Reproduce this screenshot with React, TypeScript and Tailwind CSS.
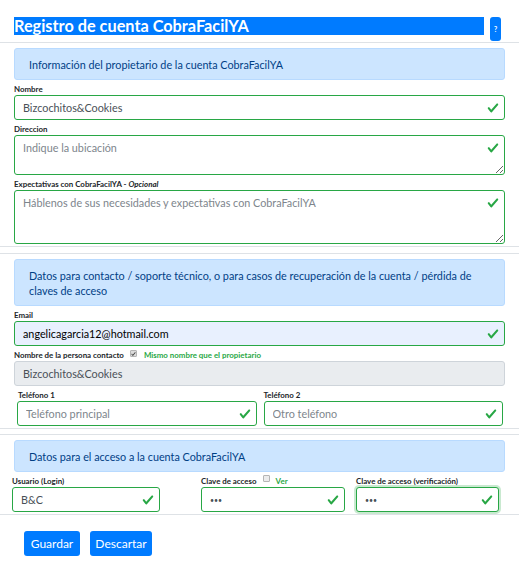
import type { ReactNode } from "react";

const checkPath =
  "M2.3 6.73L.6 4.53c-.4-1.04.46-1.4 1.1-.8l1.1 1.4 3.4-3.8c.6-.63 1.6-.27 1.2.7l-4 4.6c-.43.5-.8.4-1.1.1z";

function Check({ top = false }: { top?: boolean }) {
  return (
    <svg
      viewBox="0 0 8 8"
      className={top ? "pointer-events-none absolute right-[6px] top-[7px] h-[12px] w-[12px]" : "pointer-events-none absolute right-[6px] top-1/2 h-[12px] w-[12px] -translate-y-1/2"}
    >
      <path fill="#28a745" d={checkPath} />
    </svg>
  );
}

function Label({ children }: { children: ReactNode }) {
  return <div className="flex h-[15px] items-end pb-[1px] text-[7.9px] font-bold leading-[10px] text-[#212529]">{children}</div>;
}

function Alert({ children, tall = false }: { children: ReactNode; tall?: boolean }) {
  return (
    <div
      className={
        tall
          ? "flex h-[47px] items-center rounded-[3px] border border-[#b8daff] bg-[#cce5ff] pl-[14px] text-[10.8px] leading-[15px] text-[#004085]"
          : "flex h-[32px] items-center rounded-[3px] border border-[#b8daff] bg-[#cce5ff] pl-[14px] text-[10.8px] leading-[15px] text-[#004085]"
      }
    >
      <div>{children}</div>
    </div>
  );
}

const inputCls =
  "block h-[25px] w-full rounded-[3px] border border-[#28a745] bg-white pl-[8px] pr-[22px] text-[10.8px] text-[#495057] outline-none placeholder:text-[#7d858c]";

function TextInput({ value, placeholder, type = "text", className = "" }: { value?: string; placeholder?: string; type?: string; className?: string }) {
  return (
    <div className="relative">
      <input type={type} defaultValue={value} placeholder={placeholder} className={inputCls + " " + className} />
      <Check />
    </div>
  );
}

function Area({ placeholder, h }: { placeholder: string; h: string }) {
  return (
    <div className="relative">
      <textarea
        placeholder={placeholder}
        className={
          "block w-full rounded-[3px] border border-[#28a745] bg-white pl-[8px] pr-[22px] pt-[5px] text-[10.8px] leading-[14px] text-[#495057] outline-none placeholder:text-[#7d858c] " +
          h
        }
      />
      <Check top />
    </div>
  );
}

function Box({ checked = false }: { checked?: boolean }) {
  return (
    <span
      className={
        checked
          ? "mb-[3px] ml-[6px] inline-flex h-[7px] w-[7px] items-center justify-center rounded-[1px] border border-[#b5b5b5] bg-[#dcdcdc]"
          : "mb-[4px] ml-[6px] inline-flex h-[7px] w-[7px] rounded-[1px] border border-[#b5b5b5] bg-[#ececec]"
      }
    >
      {checked ? (
        <svg viewBox="0 0 8 8" className="h-[6px] w-[6px]">
          <path fill="#444" d={checkPath} />
        </svg>
      ) : null}
    </span>
  );
}

export default function App() {
  return (
    <div className="min-h-[575px] w-[519px] bg-white font-['Lato',sans-serif] text-[#212529]">
      <div className="flex items-start pl-[14px] pr-[18px] pt-[17px]">
        <div className="h-[18px] flex-1 bg-[#007bff] text-[16.3px] font-bold leading-[18px] text-white">Registro de cuenta CobraFacilYA</div>
        <button type="button" className="ml-[6px] h-[24px] w-[11px] rounded-[3px] bg-[#007bff] text-[7px] font-bold leading-none text-white">
          ?
        </button>
      </div>
      <div className="mt-[1px] border-t border-[#dee2e6]" />

      {/* propietario */}
      <div className="border-b border-[#dee2e6] px-[14px] pb-[2px] pt-[5px]">
        <Alert>Información del propietario de la cuenta CobraFacilYA</Alert>
        <Label>Nombre</Label>
        <TextInput value="Bizcochitos&Cookies" />
        <Label>Direccion</Label>
        <Area placeholder="Indique la ubicación" h="h-[40px]" />
        <Label>
          Expectativas con CobraFacilYA -&nbsp;<i>Opcional</i>
        </Label>
        <Area placeholder="Háblenos de sus necesidades y expectativas con CobraFacilYA" h="h-[54px]" />
      </div>

      {/* contacto */}
      <div className="mt-[6px] border-y border-[#dee2e6] px-[14px] pb-[2px] pt-[5px]">
        <Alert tall>
          Datos para contacto / soporte técnico, o para casos de recuperación de la cuenta / pérdida de
          <br />
          claves de acceso
        </Alert>
        <Label>Email</Label>
        <TextInput value="angelicagarcia12@hotmail.com" className="!bg-[#e8f0fe] !text-[#000]" />
        <Label>
          <span>Nombre de la persona contacto</span>
          <Box checked />
          <span className="ml-[7px] text-[#28a745]">Mismo nombre que el propietario</span>
        </Label>
        <input
          disabled
          defaultValue="Bizcochitos&Cookies"
          className="block h-[25px] w-full rounded-[3px] border border-[#ced4da] bg-[#e9ecef] pl-[8px] text-[10.8px] text-[#495057]"
        />
        <div className="grid grid-cols-2 gap-x-[7px] pl-[3px] pr-[2px]">
          <div>
            <div className="pl-[1px]">
              <Label>Teléfono 1</Label>
            </div>
            <TextInput placeholder="Teléfono principal" />
          </div>
          <div>
            <Label>Teléfono 2</Label>
            <TextInput placeholder="Otro teléfono" />
          </div>
        </div>
      </div>

      {/* acceso */}
      <div className="mt-[5px] border-y border-[#dee2e6] pb-[2px] pt-[5px]">
        <div className="px-[14px]">
          <Alert>Datos para el acceso a la cuenta CobraFacilYA</Alert>
        </div>
        <div className="flex pl-[12px]">
          <div className="w-[148px]">
            <Label>Usuario (Login)</Label>
            <TextInput value="B&C" />
          </div>
          <div className="ml-[41px] w-[144px]">
            <Label>
              <span>Clave de acceso</span>
              <Box />
              <span className="ml-[6px] text-[#28a745]">Ver</span>
            </Label>
            <TextInput type="password" value="***" className="!text-[7px]" />
          </div>
          <div className="ml-[11px] w-[143px]">
            <Label>Clave de acceso (verificación)</Label>
            <TextInput type="password" value="***" className="!text-[7px] shadow-[0_0_0_2px_rgba(40,167,69,0.25)]" />
          </div>
        </div>
      </div>

      <div className="flex gap-[10px] pl-[24px] pt-[16px]">
        <button type="button" className="h-[25px] w-[56px] rounded-[3px] bg-[#007bff] text-[12px] text-white">
          Guardar
        </button>
        <button type="button" className="h-[25px] w-[62px] rounded-[3px] bg-[#007bff] text-[12px] text-white">
          Descartar
        </button>
      </div>
    </div>
  );
}
